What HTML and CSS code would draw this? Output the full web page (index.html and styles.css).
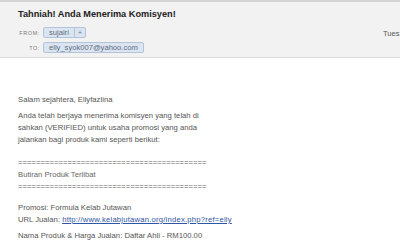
FILE: index.html
```html
<!DOCTYPE html>
<html lang="ms">
<head>
<meta charset="utf-8"/>
<meta content="width=device-width, initial-scale=1.0" name="viewport"/>
<title>Tahniah! Anda Menerima Komisyen!</title>
<link rel="stylesheet" href="styles.css">
</head>
<body>
<div class="msg-head">
  <div class="head-main">
    <h1 class="subject">Tahniah! Anda Menerima Komisyen!</h1>
    <div class="addr-row">
      <span class="addr-label">FROM:</span>
      <span class="chip"><span class="chip-name">sujairi</span><span class="chip-add">+</span></span>
    </div>
    <div class="addr-row">
      <span class="addr-label">TO:</span>
      <span class="chip"><span class="chip-name">elly_syok007@yahoo.com</span></span>
    </div>
  </div>
  <div class="head-date">Tues</div>
</div>
<div class="msg-body">
  <p class="greet">Salam sejahtera, Ellyfazlina</p>
  <p class="intro">Anda telah berjaya menerima komisyen yang telah di<br/>sahkan (VERIFIED) untuk usaha promosi yang anda<br/>jalankan bagi produk kami seperti berikut:</p>
  <p class="section">==========================================<br/>Butiran Produk Terlibat<br/>==========================================</p>
  <p class="promo">Promosi: Formula Kelab Jutawan<br/>URL Jualan: <a href="#">http://www.kelabjutawan.org/index.php?ref=elly</a></p>
  <p class="price">Nama Produk &amp; Harga Jualan: Daftar Ahli - RM100.00</p>
</div>
</body>
</html>
```

FILE: styles.css
```css
body {
  margin: 0;
  font-family: "Liberation Sans", Arial, sans-serif;
  background: #fff;
  color: #555;
  overflow: hidden;
}
.msg-head {
  display: grid;
  grid-template-columns: 365px auto;
  background: #f2f2f2;
  border-top: 2px solid #d4d4d4;
  border-bottom: 1px solid #dcdcdc;
  padding: 6px 0 4px 18px;
  height: 45px;
  white-space: nowrap;
}
.subject {
  margin: 0 0 6px;
  font-size: 9.2px;
  line-height: 13px;
  font-weight: bold;
  color: #222;
}
.addr-row {
  display: flex;
  align-items: center;
  margin-bottom: 4px;
}
.addr-label {
  width: 22px;
  margin-right: 3px;
  text-align: right;
  font-size: 5.5px;
  letter-spacing: 0.6px;
  color: #7a7a7a;
}
.chip {
  display: flex;
  height: 9px;
  border: 1px solid #b3c3d8;
  border-radius: 2px;
  background: #dbe5f1;
  font-size: 7.6px;
  line-height: 9px;
  color: #5b6b82;
}
.chip-name {
  padding: 0 5px;
}
.chip-add {
  padding: 0 3px;
  border-left: 1px solid #b3c3d8;
  color: #6f84a3;
}
.head-date {
  padding-top: 21px;
  font-size: 7.6px;
  color: #555;
}
.msg-body {
  padding: 36px 18px 0;
  font-size: 7.7px;
  line-height: 12px;
  white-space: nowrap;
}
.msg-body p {
  margin: 0;
}
.intro {
  margin-top: 4px !important;
}
.section {
  margin-top: 11px !important;
  color: #666;
}
.promo {
  margin-top: 9px !important;
}
.promo a {
  color: #2f55a4;
  letter-spacing: 0.2px;
}
.price {
  margin-top: 4px !important;
}
```
